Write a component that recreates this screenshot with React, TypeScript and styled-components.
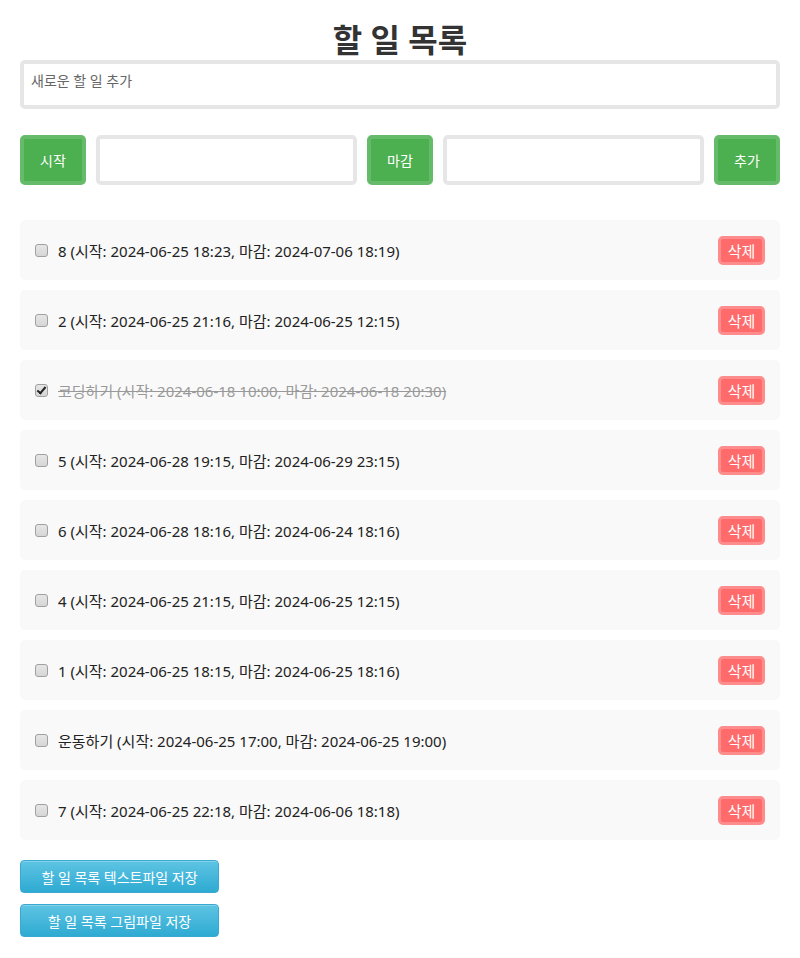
import React from "react";
import styled, { createGlobalStyle } from "styled-components";

const GlobalStyle = createGlobalStyle`
  html, body { margin: 0; padding: 0; background: #fff; }
  body { font-family: "Noto Sans", "Noto Sans CJK KR", sans-serif; color: #222; }
  * { box-sizing: border-box; }
`;

const Page = styled.div`
  width: 800px;
  padding: 20px 20px 20px;
`;

const Title = styled.h1`
  margin: 0;
  text-align: center;
  font-size: 32px;
  line-height: 40px;
  font-weight: 700;
  color: #333;
`;

const TextArea = styled.textarea`
  display: block;
  width: 100%;
  height: 49px;
  border: 4px solid #e6e6e6;
  border-radius: 5px;
  padding: 6px 7px;
  font-family: inherit;
  font-size: 14px;
  resize: none;
  outline: none;
  &::placeholder { color: #666; }
`;

const DateRow = styled.div`
  display: flex;
  gap: 10px;
  margin-top: 26px;
  height: 50px;
`;

const GreenButton = styled.button`
  width: 66px;
  flex: none;
  border: 4px solid #66bb6a;
  border-radius: 5px;
  background: #4caf50;
  color: #fff;
  font-family: inherit;
  font-size: 14px;
  padding: 0;
`;

const DateInput = styled.input`
  flex: 1;
  min-width: 0;
  border: 4px solid #e6e6e6;
  border-radius: 5px;
  background: #fff;
  outline: none;
`;

const List = styled.ul`
  list-style: none;
  margin: 35px 0 0;
  padding: 0;
  display: flex;
  flex-direction: column;
  gap: 10px;
`;

const Item = styled.li`
  display: flex;
  align-items: center;
  height: 60px;
  padding: 0 15px;
  background: #f9f9f9;
  border-radius: 5px;
`;

const Check = styled.input`
  appearance: none;
  -webkit-appearance: none;
  position: relative;
  margin: 0 10px 0 0;
  width: 13px;
  height: 13px;
  flex: none;
  border: 1px solid #a0a0a0;
  border-radius: 3px;
  background: linear-gradient(#e6e6e6, #d6d6d6);
  &:checked::after {
    content: "";
    position: absolute;
    left: 3px;
    top: 0px;
    width: 3px;
    height: 7px;
    border: solid #222;
    border-width: 0 2px 2px 0;
    transform: rotate(40deg);
  }
`;

const ItemText = styled.span<{ $done?: boolean }>`
  flex: 1;
  font-size: 15px;
  color: ${(p) => (p.$done ? "#999" : "#222")};
  text-decoration: ${(p) => (p.$done ? "line-through" : "none")};
`;

const DeleteButton = styled.button`
  width: 47px;
  height: 29px;
  border: 3px solid #ff8c8c;
  border-radius: 5px;
  background: #ff6b6b;
  color: #fff;
  font-family: inherit;
  font-size: 15px;
  padding: 0;
`;

const SaveArea = styled.div`
  display: flex;
  flex-direction: column;
  align-items: flex-start;
  gap: 11px;
  margin-top: 20px;
`;

const BlueButton = styled.button`
  width: 199px;
  height: 33px;
  border: 1px solid #3aa8d0;
  border-radius: 4px;
  background: linear-gradient(#5ec4e3, #2eaad2);
  box-shadow: inset 0 1px 0 rgba(255,255,255,0.25);
  color: #fff;
  font-family: inherit;
  font-size: 14px;
  padding: 0;
`;

const todos = [
  { text: "8 (시작: 2024-06-25 18:23, 마감: 2024-07-06 18:19)", done: false },
  { text: "2 (시작: 2024-06-25 21:16, 마감: 2024-06-25 12:15)", done: false },
  { text: "코딩하기 (시작: 2024-06-18 10:00, 마감: 2024-06-18 20:30)", done: true },
  { text: "5 (시작: 2024-06-28 19:15, 마감: 2024-06-29 23:15)", done: false },
  { text: "6 (시작: 2024-06-28 18:16, 마감: 2024-06-24 18:16)", done: false },
  { text: "4 (시작: 2024-06-25 21:15, 마감: 2024-06-25 12:15)", done: false },
  { text: "1 (시작: 2024-06-25 18:15, 마감: 2024-06-25 18:16)", done: false },
  { text: "운동하기 (시작: 2024-06-25 17:00, 마감: 2024-06-25 19:00)", done: false },
  { text: "7 (시작: 2024-06-25 22:18, 마감: 2024-06-06 18:18)", done: false },
];

export default function App() {
  return (
    <>
      <GlobalStyle />
      <Page>
        <Title>할 일 목록</Title>
        <TextArea placeholder="새로운 할 일 추가" />
        <DateRow>
          <GreenButton>시작</GreenButton>
          <DateInput />
          <GreenButton>마감</GreenButton>
          <DateInput />
          <GreenButton>추가</GreenButton>
        </DateRow>
        <List>
          {todos.map((t, i) => (
            <Item key={i}>
              <Check type="checkbox" defaultChecked={t.done} />
              <ItemText $done={t.done}>{t.text}</ItemText>
              <DeleteButton>삭제</DeleteButton>
            </Item>
          ))}
        </List>
        <SaveArea>
          <BlueButton>할 일 목록 텍스트파일 저장</BlueButton>
          <BlueButton>할 일 목록 그림파일 저장</BlueButton>
        </SaveArea>
      </Page>
    </>
  );
}
